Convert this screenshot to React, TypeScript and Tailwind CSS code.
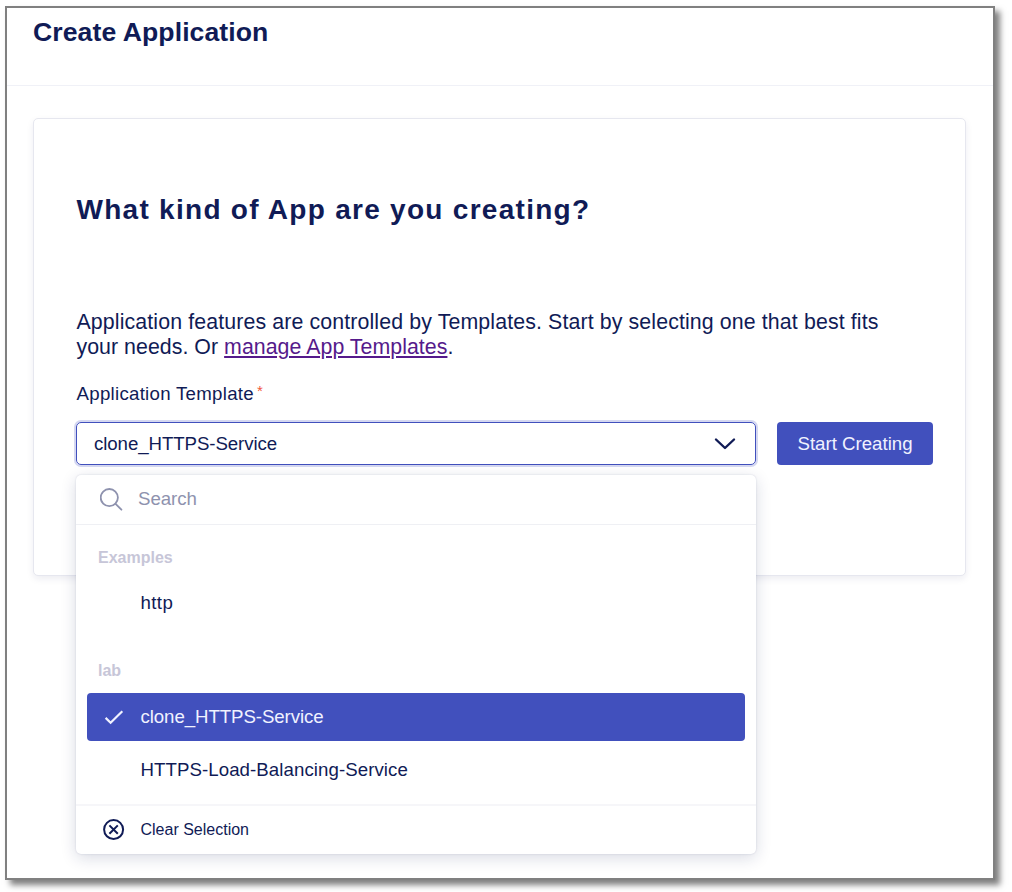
function ChevronDown() {
  return (
    <svg className="h-[14px] w-[22px]" viewBox="0 0 22 14" fill="none" stroke="currentColor" strokeWidth="2.4" strokeLinecap="round" strokeLinejoin="round">
      <path d="M2 2.5 11 11 20 2.5" />
    </svg>
  );
}

function SearchIcon() {
  return (
    <svg className="size-6" viewBox="0 0 24 24" fill="none" stroke="currentColor" strokeWidth="1.8" strokeLinecap="round">
      <circle cx="9.3" cy="9.6" r="8.6" />
      <path d="M15.6 15.9 21.4 21.7" />
    </svg>
  );
}

function CheckIcon() {
  return (
    <svg className="h-4 w-5" viewBox="0 0 20 16" fill="none" stroke="currentColor" strokeWidth="2.2">
      <path d="M1.6 8.9 6.6 13.7 18.3 2.2" />
    </svg>
  );
}

function ClearIcon() {
  return (
    <svg className="size-[22px]" viewBox="0 0 22 22" fill="none" stroke="currentColor" strokeWidth="2">
      <circle cx="10.6" cy="10.6" r="9.5" />
      <path d="M6.4 6.4 14.8 14.8M14.8 6.4 6.4 14.8" />
    </svg>
  );
}

function TemplateMenu() {
  return (
    <div className="absolute top-[53px] left-0 flex h-[379px] w-[680px] flex-col rounded-[5px] bg-white text-[18.67px] shadow-[0_0_2px_rgba(20,28,84,0.16),0_4px_16px_rgba(20,28,84,0.16)]">
      <div className="flex h-[50px] items-center border-b border-[#eff0f4] pl-6 text-[#8e92ae]">
        <SearchIcon />
        <span className="ml-[14px] pb-px tracking-[-0.05px]">Search</span>
      </div>
      <div className="flex grow flex-col px-[11px]">
        <div className="mt-[21px] flex h-6 items-center pl-[11px] text-[16px] font-bold text-[#c7c6d8]">Examples</div>
        <div className="mt-[9px] flex h-12 items-center pl-[53.5px] tracking-[0.4px]">http</div>
        <div className="mt-8 flex h-6 items-center pl-[11px] text-[16px] font-bold text-[#c7c6d8]">lab</div>
        <div className="mt-[10px] flex h-[47.5px] items-center rounded-[4px] bg-[#4150bd] pl-[17px] text-[#f0f2ff]">
          <CheckIcon />
          <span className="ml-[16.5px] tracking-[-0.08px]">clone_HTTPS-Service</span>
        </div>
        <div className="mt-[5.5px] flex h-12 items-center pl-[53.5px] tracking-[0.07px]">HTTPS-Load-Balancing-Service</div>
      </div>
      <div className="flex h-[50px] items-center border-t-2 border-[#f6f6f9] pl-[27px] text-[16px]">
        <ClearIcon />
        <span className="ml-[15.5px] pb-px">Clear Selection</span>
      </div>
    </div>
  );
}

export default function App() {
  return (
    <div className="h-[892px] w-[1012px] overflow-hidden bg-white pt-[6px] pl-[5px] font-['Liberation_Sans',Arial,sans-serif] text-[#101b56]">
      <div className="h-[874px] w-[990px] border-2 border-[#808080] bg-white shadow-[5px_5px_6px_rgba(0,0,0,0.5)]">
        <header className="flex h-[78px] items-start border-b border-[#f0f1f7] pt-2 pl-[26px]">
          <h1 className="text-[26.6px] leading-[32px] font-bold tracking-[0.08px]">Create Application</h1>
        </header>
        <main className="mt-[32px] ml-[26px] h-[458px] w-[933px] rounded-[5px] border border-[#e6e7ef] bg-white pt-[71px] pl-[42.5px] shadow-[0_3px_7px_rgba(20,28,84,0.08)]">
          <h2 className="text-[28px] leading-10 font-bold tracking-[1.28px]">What kind of App are you creating?</h2>
          <p className="mt-[80px] w-[850px] text-[21.33px] leading-[25px] tracking-[0.12px]">
            Application features are controlled by Templates. Start by selecting one that best fits
            <br />
            <span className="tracking-[0.04px]">
              your needs. Or <a className="text-[#551a8b] underline decoration-[1.5px] underline-offset-2">manage App Templates</a>.
            </span>
          </p>
          <label className="mt-[22px] flex h-6 items-center text-[18.67px] tracking-[0.28px]">
            Application Template
            <span className="ml-[3px] pb-[6px] text-[15px] text-[#f0573c]">*</span>
          </label>
          <div className="-ml-[0.5px] mt-4 flex gap-[21px]">
            <div className="relative h-[43px] w-[680px]">
              <div className="flex h-full items-center justify-between rounded-[5px] border border-[#4150bd] pr-[19px] pl-[17px] text-[18.67px] tracking-[-0.08px] ring-2 ring-[#d5d8f1]">
                clone_HTTPS-Service
                <ChevronDown />
              </div>
              <TemplateMenu />
            </div>
            <button className="flex h-[43px] w-[156px] items-center justify-center rounded-[4px] bg-[#4150bd] text-[18.67px] text-[#f0f2ff]">Start Creating</button>
          </div>
        </main>
      </div>
    </div>
  );
}
